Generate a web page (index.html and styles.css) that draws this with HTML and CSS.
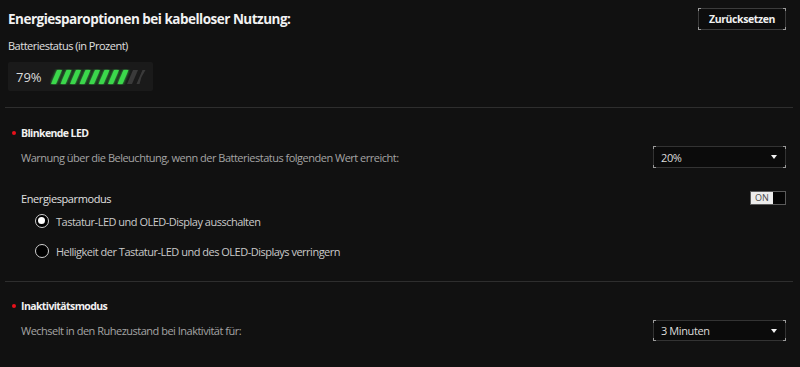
FILE: index.html
```html
<!DOCTYPE html>
<html lang="de">
<head>
<meta charset="utf-8">
<title>Energiesparoptionen</title>
<link rel="stylesheet" href="styles.css">
</head>
<body>
<div class="page">
  <div class="header">
    <h1 class="title">Energiesparoptionen bei kabelloser Nutzung:</h1>
    <button class="btn framed">Zurücksetzen</button>
  </div>
  <div class="label-row">Batteriestatus (in Prozent)</div>
  <div class="battery">
    <span class="pct">79%</span>
    <svg class="stripes" width="96" height="16" viewBox="0 0 96 16">
      <defs>
        <filter id="glow" x="-20%" y="-50%" width="140%" height="200%">
          <feGaussianBlur stdDeviation="1.4" result="b"/>
          <feMerge><feMergeNode in="b"/><feMergeNode in="SourceGraphic"/></feMerge>
        </filter>
      </defs>
      <g fill="#3bd84c" filter="url(#glow)">
        <polygon points="1,15 7,1 12,1 6,15"/>
        <polygon points="10.5,15 16.5,1 21.5,1 15.5,15"/>
        <polygon points="20,15 26,1 31,1 25,15"/>
        <polygon points="29.5,15 35.5,1 40.5,1 34.5,15"/>
        <polygon points="39,15 45,1 50,1 44,15"/>
        <polygon points="48.5,15 54.5,1 59.5,1 53.5,15"/>
        <polygon points="58,15 64,1 69,1 63,15"/>
        <polygon points="67.5,15 73.5,1 78.5,1 72.5,15"/>
      </g>
      <g fill="#3a3a3a">
        <polygon points="77,15 83,1 88,1 82,15"/>
        <polygon points="86.5,15 92.5,1 95.5,1 91.5,8 89.5,15"/>
      </g>
    </svg>
  </div>
  <div class="divider"></div>

  <section class="section">
    <div class="sec-title"><span class="dot"></span>Blinkende LED</div>
    <div class="setting-row">
      <span class="desc">Warnung über die Beleuchtung, wenn der Batteriestatus folgenden Wert erreicht:</span>
      <div class="select framed"><span>20%</span><span class="arrow"></span></div>
    </div>
    <div class="mode-row">
      <span class="mode-label">Energiesparmodus</span>
      <div class="toggle"><span class="toggle-on">ON</span><span class="toggle-off"></span></div>
    </div>
    <div class="radio-row first">
      <span class="radio checked"></span>
      <span class="radio-label">Tastatur-LED und OLED-Display ausschalten</span>
    </div>
    <div class="radio-row second">
      <span class="radio"></span>
      <span class="radio-label">Helligkeit der Tastatur-LED und des OLED-Displays verringern</span>
    </div>
  </section>
  <div class="divider second-divider"></div>

  <section class="section">
    <div class="sec-title inactive"><span class="dot"></span>Inaktivitätsmodus</div>
    <div class="setting-row small">
      <span class="desc">Wechselt in den Ruhezustand bei Inaktivität für:</span>
      <div class="select framed"><span>3 Minuten</span><span class="arrow"></span></div>
    </div>
  </section>
</div>
</body>
</html>
```

FILE: styles.css
```css
* { box-sizing: border-box; }
html, body { margin: 0; padding: 0; }
body {
  background: #111111;
  color: #e6e6e6;
  font-family: "Open Sans", "Noto Sans", sans-serif;
  width: 800px;
  height: 367px;
  overflow: hidden;
}
.page {
  padding: 0 7px 0 5px;
}
.header {
  display: flex;
  justify-content: space-between;
  align-items: center;
  height: 22px;
  margin-top: 8px;
  padding-left: 3px;
  padding-right: 7px;
}
.title {
  margin: 0;
  font-size: 13.5px;
  font-weight: 700;
  color: #f2f2f2;
  letter-spacing: -0.5px;
}
.framed { position: relative; }
.framed::before {
  content: "";
  position: absolute;
  inset: -1px;
  pointer-events: none;
  background:
    linear-gradient(#9a9a9a, #9a9a9a) left top / 3px 1px no-repeat,
    linear-gradient(#9a9a9a, #9a9a9a) left top / 1px 3px no-repeat,
    linear-gradient(#9a9a9a, #9a9a9a) right top / 3px 1px no-repeat,
    linear-gradient(#9a9a9a, #9a9a9a) right top / 1px 3px no-repeat,
    linear-gradient(#9a9a9a, #9a9a9a) left bottom / 3px 1px no-repeat,
    linear-gradient(#9a9a9a, #9a9a9a) left bottom / 1px 3px no-repeat,
    linear-gradient(#9a9a9a, #9a9a9a) right bottom / 3px 1px no-repeat,
    linear-gradient(#9a9a9a, #9a9a9a) right bottom / 1px 3px no-repeat;
}
.btn {
  width: 88px;
  height: 22px;
  background: #0d0d0d;
  border: 1px solid #3c3c3c;
  color: #f0f0f0;
  font-family: inherit;
  font-size: 10.5px;
  font-weight: 700;
  letter-spacing: -0.4px;
  padding: 0;
  margin: 0;
}
.label-row {
  margin-top: 8px;
  height: 16px;
  line-height: 16px;
  padding-left: 3px;
  font-size: 11px;
  letter-spacing: -0.5px;
  color: #e0e0e0;
}
.battery {
  margin-top: 8px;
  margin-left: 3px;
  width: 145px;
  height: 29px;
  background: #1a1a1a;
  border-radius: 2px;
  display: flex;
  align-items: center;
  padding-left: 8px;
}
.pct {
  font-size: 13px;
  color: #dcdcdc;
  width: 34px;
}
.stripes { display: block; }
.divider {
  height: 1px;
  background: #2e2e2e;
  margin-top: 16px;
}
.section { padding-left: 16px; padding-right: 7px; }
.sec-title {
  position: relative;
  margin-top: 17px;
  height: 16px;
  line-height: 16px;
  font-size: 10.5px;
  font-weight: 700;
  letter-spacing: -0.6px;
  color: #f0f0f0;
}
.dot {
  position: absolute;
  left: -9px;
  top: 6px;
  width: 4px;
  height: 4px;
  border-radius: 50%;
  background: #e8101a;
}
.setting-row {
  margin-top: 5px;
  height: 22px;
  display: flex;
  justify-content: space-between;
  align-items: center;
}
.setting-row.small { margin-top: 6px; height: 21px; }
.desc {
  font-size: 11px;
  letter-spacing: -0.5px;
  color: #a4a4a4;
}
.select {
  width: 133px;
  height: 100%;
  background: #0b0b0b;
  border: 1px solid #333;
  display: flex;
  align-items: center;
  justify-content: space-between;
  padding: 0 8px 0 7px;
  font-size: 11px;
  letter-spacing: -0.4px;
  color: #dcdcdc;
}
.arrow {
  width: 0;
  height: 0;
  border-left: 3.5px solid transparent;
  border-right: 3.5px solid transparent;
  border-top: 4px solid #f2f2f2;
}
.mode-row {
  margin-top: 22px;
  height: 16px;
  display: flex;
  justify-content: space-between;
  align-items: center;
}
.mode-label { font-size: 11px; letter-spacing: -0.4px; color: #e0e0e0; }
.toggle {
  display: flex;
  width: 36px;
  height: 14px;
  border: 1px solid #5a5a5a;
}
.toggle-on {
  width: 22px;
  background: #ececec;
  color: #4a4a4a;
  font-size: 9px;
  line-height: 12px;
  text-align: center;
}
.toggle-off { flex: 1; background: #050505; }
.radio-row {
  display: flex;
  align-items: center;
  height: 16px;
  padding-left: 14px;
}
.radio-row.first { margin-top: 7px; }
.radio-row.second { margin-top: 14px; }
.radio {
  width: 14px;
  height: 14px;
  border-radius: 50%;
  border: 1.5px solid #d0d0d0;
  background: #000;
  position: relative;
  flex: none;
}
.radio.checked::after {
  content: "";
  position: absolute;
  left: 2px;
  top: 2px;
  width: 7px;
  height: 7px;
  border-radius: 50%;
  background: #ffffff;
}
.radio-label {
  margin-left: 7px;
  font-size: 11px;
  letter-spacing: -0.5px;
  color: #cacaca;
}
.second-divider { margin-top: 22px; }
.sec-title.inactive { margin-top: 16px; }
```
